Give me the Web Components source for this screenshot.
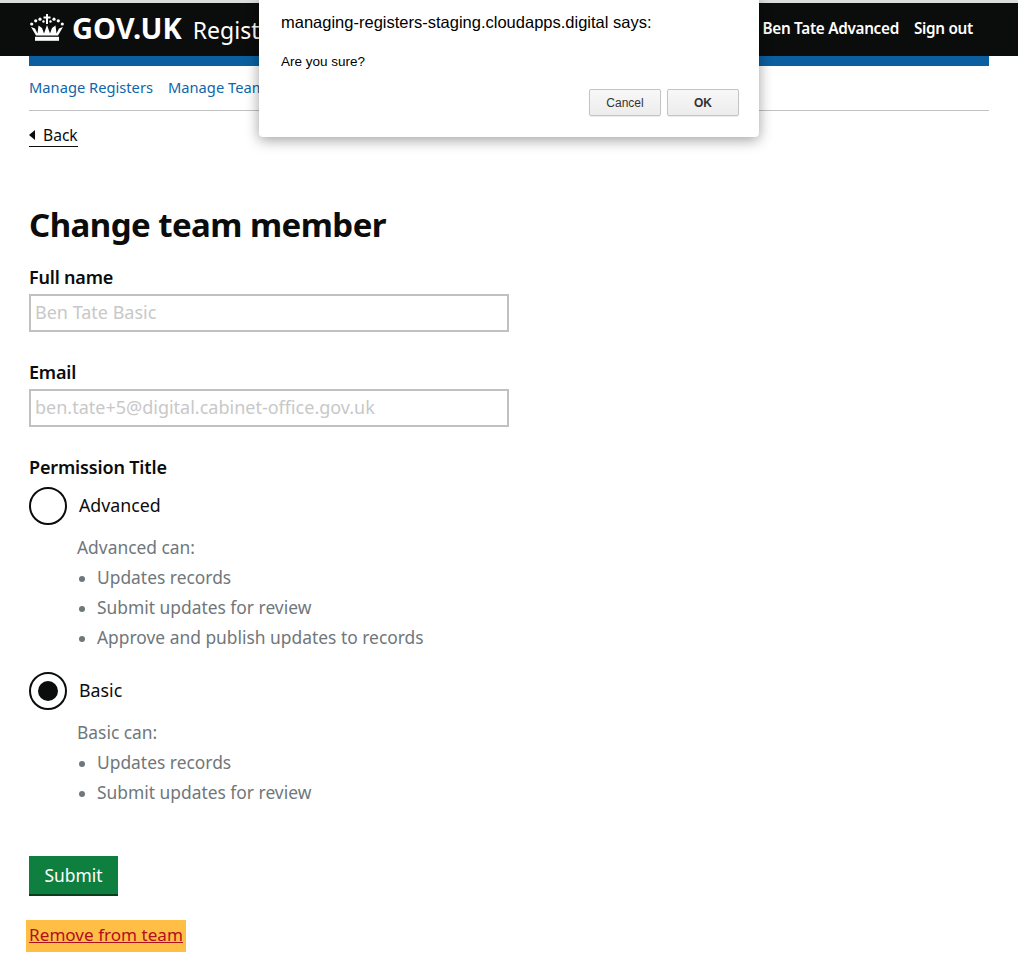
<!DOCTYPE html>
<html lang="en">
<head>
<meta charset="utf-8">
<title>Change team member</title>
<style>
  html, body { margin: 0; padding: 0; background: #fff; }
  body { font-family: "Noto Sans", "Liberation Sans", sans-serif; color: #0b0c0c; }
</style>
</head>
<body>
<gov-header service="Registers" user="Ben Tate Advanced"></gov-header>
<gov-main>
  <gov-nav></gov-nav>
  <gov-back>Back</gov-back>
  <h-title>Change team member</h-title>
  <gov-field label="Full name" value="Ben Tate Basic"></gov-field>
  <gov-field label="Email" value="ben.tate+5@digital.cabinet-office.gov.uk"></gov-field>
  <perm-group title="Permission Title">
    <perm-radio label="Advanced" intro="Advanced can:" items="Updates records|Submit updates for review|Approve and publish updates to records"></perm-radio>
    <perm-radio label="Basic" checked intro="Basic can:" items="Updates records|Submit updates for review"></perm-radio>
  </perm-group>
  <gov-submit>Submit</gov-submit>
  <remove-link>Remove from team</remove-link>
</gov-main>
<confirm-dialog origin="managing-registers-staging.cloudapps.digital" message="Are you sure?"></confirm-dialog>

<script>
const FONT = `"Noto Sans", "Liberation Sans", sans-serif`;

class GovHeader extends HTMLElement {
  connectedCallback() {
    this.attachShadow({ mode: "open" });
    this.shadowRoot.innerHTML = `
      <style>
        :host { display: block; font-family: ${FONT}; }
        .grey { height: 3px; background: #dcdcdc; }
        .bar { height: 53px; box-sizing: border-box; padding: 0 45px 4px 29px; background: #0b0c0c; color: #fff; display: flex; align-items: center; }
        svg { width: 36px; height: 27px; display: block; margin-right: 7px; }
        .brand { display: flex; align-items: baseline; }
        .logo { font-size: 29px; font-weight: 700; }
        .service { font-size: 23px; margin-left: 11px; }
        .right { margin-left: auto; display: flex; gap: 15px; font-size: 15.3px; font-weight: 600; letter-spacing: -0.3px; }
        .blue { height: 10px; background: #0b5fa0; margin: 0 29px; }
      </style>
      <div class="grey"></div>
      <div class="bar">
        <svg viewBox="0 0 36 27" fill="#fff">
          <path d="M17 0h2v2.500h2.500v2H19V10h-2V4.500h-2.500v-2H17z"/>
          <circle cx="2.700" cy="10" r="1.600"/><circle cx="33.300" cy="10" r="1.600"/>
          <circle cx="6.700" cy="6.800" r="1.600"/><circle cx="29.300" cy="6.800" r="1.600"/>
          <circle cx="11" cy="5.200" r="1.600"/><circle cx="25" cy="5.200" r="1.600"/>
          <circle cx="14.500" cy="7.500" r="1.200"/><circle cx="21.500" cy="7.500" r="1.200"/>
          <path d="M2 13 7 21.500H29L34 13 30 14.500 27.500 19.500 26.500 11.500 23 14 21 19.500 18 11 15 19.500 13 14 9.500 11.500 8.500 19.500 6 14.500Z"/>
          <rect x="6" y="22.800" width="24" height="4"/>
        </svg>
        <div class="brand">
          <span class="logo">GOV.UK</span>
          <span class="service">${this.getAttribute("service")}</span>
        </div>
        <div class="right"><span>${this.getAttribute("user")}</span><span>Sign out</span></div>
      </div>
      <div class="blue"></div>
    `;
  }
}

class GovMain extends HTMLElement {
  constructor() {
    super();
    this.attachShadow({ mode: "open" });
    this.shadowRoot.innerHTML = `
      <style>:host { display: block; padding: 0 29px; }</style>
      <slot></slot>
    `;
  }
}

class GovNav extends HTMLElement {
  constructor() {
    super();
    this.attachShadow({ mode: "open" });
    this.shadowRoot.innerHTML = `
      <style>
        :host { display: flex; gap: 15px; height: 45px; box-sizing: border-box; padding-bottom: 3px; align-items: center; border-bottom: 1px solid #bfc1c3; font: 14.7px/20px ${FONT}; color: #0f66aa; }
      </style>
      <span>Manage Registers</span><span>Manage Teams</span>
    `;
  }
}

class GovBack extends HTMLElement {
  constructor() {
    super();
    this.attachShadow({ mode: "open" });
    this.shadowRoot.innerHTML = `
      <style>
        :host { display: block; margin-top: 14px; height: 21px; font: 15.6px/19px ${FONT}; color: #0b0c0c; }
        a { display: inline-flex; align-items: center; gap: 8px; border-bottom: 1px solid #0b0c0c; padding-bottom: 1px; height: 19px; }
        i { width: 0; height: 0; border: 5px solid transparent; border-left: 0; border-right: 6px solid #0b0c0c; }
      </style>
      <a><i></i><slot></slot></a>
    `;
  }
}

class HTitle extends HTMLElement {
  constructor() {
    super();
    this.attachShadow({ mode: "open" });
    this.shadowRoot.innerHTML = `
      <style>
        :host { display: block; margin-top: 57px; font: 700 33px/43px ${FONT}; letter-spacing: -0.55px; color: #0b0c0c; }
      </style>
      <slot></slot>
    `;
  }
}

class GovField extends HTMLElement {
  connectedCallback() {
    this.attachShadow({ mode: "open" });
    this.shadowRoot.innerHTML = `
      <style>
        :host { display: block; margin-top: 19px; margin-bottom: 28px; font-family: ${FONT}; }
        .label { font-size: 18px; font-weight: 600; line-height: 24px; letter-spacing: -0.2px; margin-bottom: 5px; color: #0b0c0c; }
        .box { width: 480px; height: 38px; box-sizing: border-box; border: 2px solid #bfc1c3; padding: 0 4px 2px; display: flex; align-items: center; font-size: 18px; color: #c8c8c8; white-space: nowrap; }
      </style>
      <div class="label">${this.getAttribute("label")}</div>
      <div class="box">${this.getAttribute("value")}</div>
    `;
  }
}

class PermGroup extends HTMLElement {
  connectedCallback() {
    this.attachShadow({ mode: "open" });
    this.shadowRoot.innerHTML = `
      <style>
        :host { display: block; font-family: ${FONT}; }
        .title { font-size: 18px; font-weight: 600; line-height: 24px; letter-spacing: -0.15px; margin-bottom: 8px; }
        .list { display: grid; gap: 20px; }
      </style>
      <div class="title">${this.getAttribute("title")}</div>
      <div class="list"><slot></slot></div>
    `;
  }
}

class PermRadio extends HTMLElement {
  connectedCallback() {
    const items = this.getAttribute("items").split("|").map((t) => `<li>${t}</li>`).join("");
    const checked = this.hasAttribute("checked");
    this.attachShadow({ mode: "open" });
    this.shadowRoot.innerHTML = `
      <style>
        :host { display: block; font-family: ${FONT}; }
        .row { display: flex; align-items: center; gap: 12px; height: 38px; font-size: 17.8px; color: #0b0c0c; }
        .row span { margin-bottom: 2px; }
        .dot { width: 38px; height: 38px; box-sizing: border-box; border: 2px solid #0b0c0c; border-radius: 50%; display: flex; align-items: center; justify-content: center; }
        .dot b { width: 20px; height: 20px; border-radius: 50%; background: #0b0c0c; }
        .hint { margin: 7px 0 0 48px; font-size: 17.4px; line-height: 30px; color: #6f777b; }
        ul { margin: 0; padding: 0 0 0 20px; }
        li { height: 30px; }
        li::marker { font-size: 16px; }
      </style>
      <div class="row"><div class="dot">${checked ? "<b></b>" : ""}</div><span>${this.getAttribute("label")}</span></div>
      <div class="hint">${this.getAttribute("intro")}<ul>${items}</ul></div>
    `;
  }
}

class GovSubmit extends HTMLElement {
  constructor() {
    super();
    this.attachShadow({ mode: "open" });
    this.shadowRoot.innerHTML = `
      <style>
        :host { display: block; margin-top: 49px; font: 17.4px/38px ${FONT}; }
        button { all: unset; display: block; width: 89px; height: 40px; box-sizing: border-box; text-align: center; background: #0f7f40; color: #fff; border-bottom: 2px solid #0a3d20; }
      </style>
      <button><slot></slot></button>
    `;
  }
}

class RemoveLink extends HTMLElement {
  constructor() {
    super();
    this.attachShadow({ mode: "open" });
    this.shadowRoot.innerHTML = `
      <style>
        :host { display: block; margin: 24px 0 0 -3px; width: 160px; height: 32px; background: #ffbf47; font: 17.1px/29px ${FONT}; color: #b10e1e; text-align: center; white-space: nowrap; }
        a { text-decoration: underline; }
      </style>
      <a><slot></slot></a>
    `;
  }
}

class ConfirmDialog extends HTMLElement {
  connectedCallback() {
    this.attachShadow({ mode: "open" });
    this.shadowRoot.innerHTML = `
      <style>
        :host { position: absolute; left: 259px; top: 0; width: 500px; height: 137px; box-sizing: border-box; padding: 13px 20px 0 22px; background: #fff; border-radius: 0 0 4px 4px; box-shadow: 0 3px 14px rgba(0,0,0,.38); font-family: "Liberation Sans", Arial, sans-serif; color: #000; }
        .origin { font-size: 16.5px; line-height: 19px; }
        .msg { font-size: 13.5px; line-height: 16px; margin-top: 22px; }
        .buttons { display: flex; justify-content: flex-end; gap: 6px; margin-top: 19px; }
        .btn { width: 72px; height: 27px; box-sizing: border-box; display: flex; align-items: center; justify-content: center; font-size: 12px; color: #333; border: 1px solid #c4c4c4; border-radius: 2px; background: linear-gradient(#f8f8f8, #ececec); box-shadow: 0 1px 1px rgba(0,0,0,.08); }
        .ok { font-weight: 700; }
      </style>
      <div class="origin">${this.getAttribute("origin")} says:</div>
      <div class="msg">${this.getAttribute("message")}</div>
      <div class="buttons"><div class="btn">Cancel</div><div class="btn ok">OK</div></div>
    `;
  }
}

customElements.define("gov-header", GovHeader);
customElements.define("gov-main", GovMain);
customElements.define("gov-nav", GovNav);
customElements.define("gov-back", GovBack);
customElements.define("h-title", HTitle);
customElements.define("gov-field", GovField);
customElements.define("perm-group", PermGroup);
customElements.define("perm-radio", PermRadio);
customElements.define("gov-submit", GovSubmit);
customElements.define("remove-link", RemoveLink);
customElements.define("confirm-dialog", ConfirmDialog);
</script>
</body>
</html>
